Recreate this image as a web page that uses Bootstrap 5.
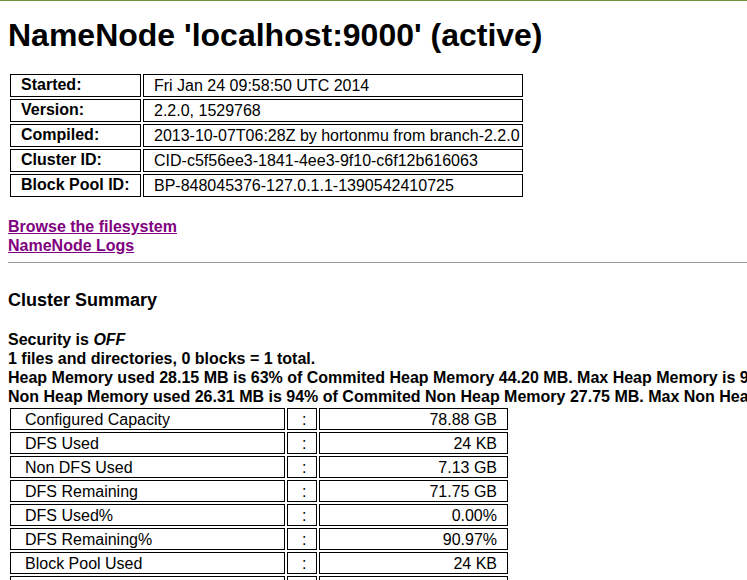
<!DOCTYPE html>
<html lang="en">
<head>
<meta charset="utf-8">
<meta name="viewport" content="width=device-width, initial-scale=1">
<title>NameNode 'localhost:9000'</title>
<link href="https://cdn.jsdelivr.net/npm/bootstrap@5.3.0/dist/css/bootstrap.min.css" rel="stylesheet">
<style>
body { font-family: "Liberation Sans", Arial, sans-serif; font-size: 16px; line-height: 19px; color: #000; background: #fff; }
.page { border-top: 1px solid #76923c; padding-left: 8px; }
.page h1 { font-size: 32px; line-height: 38px; margin: 15px 0 18px; font-weight: 700; }
.page h3 { font-size: 18px; line-height: 22px; margin: 26px 0 19px; font-weight: 700; }
.grid { border-collapse: separate; border-spacing: 2px; table-layout: fixed; }
.grid th, .grid td { border: 1px solid #000; white-space: nowrap; }
.info { width: 517px; }
.info th { width: 131px; padding: 0 10px 2px; }
.info td { padding: 1px 3px 1px 10px; }
.stats { width: 502px; }
.stats th, .stats td { height: 22px; padding: 0 10px 0 14px; font-weight: 400; }
.stats th { width: 275px; }
.stats .sep { width: 30px; padding-right: 0; }
.links { margin-top: 18px; }
.links a { color: #800080; }
.rule { margin: 7px 0 0; border-top: 1px solid #999; opacity: 1; }
</style>
<script src="https://cdn.jsdelivr.net/npm/bootstrap@5.3.0/dist/js/bootstrap.bundle.min.js"></script>
</head>
<body>
<main class="page vh-100 overflow-hidden">
<h1 class="text-nowrap">NameNode 'localhost:9000' (active)</h1>
<table class="grid info">
<tbody>
<tr><th scope="row">Started:</th><td>Fri Jan 24 09:58:50 UTC 2014</td></tr>
<tr><th scope="row">Version:</th><td>2.2.0, 1529768</td></tr>
<tr><th scope="row">Compiled:</th><td>2013-10-07T06:28Z by hortonmu from branch-2.2.0</td></tr>
<tr><th scope="row">Cluster ID:</th><td>CID-c5f56ee3-1841-4ee3-9f10-c6f12b616063</td></tr>
<tr><th scope="row">Block Pool ID:</th><td>BP-848045376-127.0.1.1-1390542410725</td></tr>
</tbody>
</table>
<nav class="links d-flex flex-column align-items-start fw-bold">
<a href="#browse">Browse the filesystem</a>
<a href="#logs">NameNode Logs</a>
</nav>
<hr class="rule">
<h3>Cluster Summary</h3>
<div class="fw-bold text-nowrap">
<div>Security is <em>OFF</em></div>
<div>1 files and directories, 0 blocks = 1 total.</div>
<div>Heap Memory used 28.15 MB is 63% of Commited Heap Memory 44.20 MB. Max Heap Memory is 96</div>
<div>Non Heap Memory used 26.31 MB is 94% of Commited Non Heap Memory 27.75 MB. Max Non Hea</div>
</div>
<table class="grid stats">
<tbody>
<tr><th scope="row">Configured Capacity</th><td class="sep">:</td><td class="text-end">78.88 GB</td></tr>
<tr><th scope="row">DFS Used</th><td class="sep">:</td><td class="text-end">24 KB</td></tr>
<tr><th scope="row">Non DFS Used</th><td class="sep">:</td><td class="text-end">7.13 GB</td></tr>
<tr><th scope="row">DFS Remaining</th><td class="sep">:</td><td class="text-end">71.75 GB</td></tr>
<tr><th scope="row">DFS Used%</th><td class="sep">:</td><td class="text-end">0.00%</td></tr>
<tr><th scope="row">DFS Remaining%</th><td class="sep">:</td><td class="text-end">90.97%</td></tr>
<tr><th scope="row">Block Pool Used</th><td class="sep">:</td><td class="text-end">24 KB</td></tr>
<tr><th scope="row"></th><td class="sep"></td><td></td></tr>
</tbody>
</table>
</main>
</body>
</html>
